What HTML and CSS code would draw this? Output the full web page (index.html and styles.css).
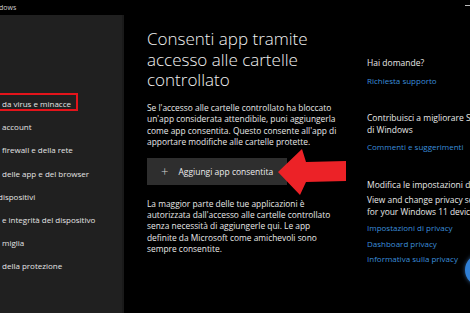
FILE: index.html
```html
<!DOCTYPE html>
<html lang="it">
<head>
    <meta charset="UTF-8">
    <meta name="viewport" content="width=device-width, initial-scale=1.0">
    <title>Sicurezza di Windows</title>
    <link rel="stylesheet" href="styles.css">
</head>
<body>
    <div class="titlebar">
        <span class="app-name">dows</span>
        <span class="win-min"></span>
    </div>

    <div class="window">
        <nav class="sidebar">
            <ul class="nav-list">
                <li class="nav-item active">da virus e minacce</li>
                <li class="nav-item">account</li>
                <li class="nav-item">firewall e della rete</li>
                <li class="nav-item">delle app e del browser</li>
                <li class="nav-item shift">dispositivi</li>
                <li class="nav-item">e integrità del dispositivo</li>
                <li class="nav-item">miglia</li>
                <li class="nav-item">della protezione</li>
            </ul>
        </nav>

        <main class="content">
            <h1 class="page-title">Consenti app tramite<br>accesso alle cartelle<br>controllato</h1>
            <p class="text">Se l'accesso alle cartelle controllato ha bloccato<br>un'app considerata attendibile, puoi aggiungerla<br>come app consentita. Questo consente all'app di<br>apportare modifiche alle cartelle protette.</p>
            <button class="add-btn"><span class="plus">+</span>Aggiungi app consentita</button>
            <p class="text">La maggior parte delle tue applicazioni è<br>autorizzata dall'accesso alle cartelle controllato<br>senza necessità di aggiungerle qui. Le app<br>definite da Microsoft come amichevoli sono<br>sempre consentite.</p>
        </main>

        <aside class="side-links">
            <section class="link-group">
                <h3>Hai domande?</h3>
                <a href="#">Richiesta supporto</a>
            </section>
            <section class="link-group">
                <h3>Contribuisci a migliorare Sicurezza<br>di Windows</h3>
                <a href="#">Commenti e suggerimenti</a>
            </section>
            <section class="link-group">
                <h3>Modifica le impostazioni di privacy</h3>
                <p>View and change privacy settings<br>for your Windows 11 device.</p>
                <a href="#">Impostazioni di privacy</a>
                <a href="#">Dashboard privacy</a>
                <a href="#">Informativa sulla privacy</a>
            </section>
        </aside>
    </div>

    <!-- freccia rossa sopra al pulsante -->
    <svg class="red-arrow" width="80" height="60" viewBox="0 0 80 60">
        <polygon points="0,24 24,1 28,14 68,13 68,33 28,34 22,47" fill="#ec2227"/>
    </svg>

    <div class="help-bubble"></div>
</body>
</html>
```

FILE: styles.css
```css
body {
    margin: 0;
    width: 470px;
    height: 313px;
    overflow: hidden;
    position: relative;
    background-color: #000;
    color: #e8e8e8;
    font-family: 'Open Sans', 'Noto Sans', sans-serif;
    font-size: 8px;
}
.titlebar {
    height: 15px;
    display: flex;
    justify-content: space-between;
    align-items: center;
}
.app-name {
    font-size: 7px;
    color: #cfcfcf;
    margin-left: -1px;
}
.win-min {
    width: 5px;
    height: 1px;
    background-color: #bbb;
    margin-bottom: 4px;
}
.window {
    display: grid;
    grid-template-columns: 124px 243px 1fr;
    height: 298px;
}
.sidebar {
    background-color: #202020;
    border-right: 2px solid #1a1a1a;
    box-sizing: border-box;
    overflow: hidden;
}
.nav-list {
    list-style: none;
    margin: 0;
    padding: 77px 0 0;
}
.nav-item {
    height: 23.2px;
    line-height: 23.2px;
    padding-left: 2px;
    white-space: nowrap;
    color: #e4e4e4;
}
.nav-item.active {
    width: 78px;
    height: 18px;
    line-height: 17px;
    margin: 1px 0 4.2px;
    border: 2px solid #e3141b;
    border-left: 0;
    box-sizing: border-box;
}
.nav-item.shift {
    padding-left: 0;
    margin-left: -2px;
}
.content {
    padding-left: 23px;
    white-space: nowrap;
}
.page-title {
    font-size: 17px;
    font-weight: 300;
    line-height: 20.7px;
    margin: 14px 0 11px;
    color: #f2f2f2;
}
.text {
    font-size: 8.4px;
    line-height: 11.2px;
    margin: 0;
}
.add-btn {
    display: flex;
    align-items: center;
    width: 140px;
    height: 27px;
    margin: 11px 0 13px;
    padding: 0 0 0 14px;
    background-color: #2e2e2e;
    border: 0;
    color: #ececec;
    font-family: inherit;
    font-size: 8.5px;
}
.plus {
    font-size: 13px;
    font-weight: 300;
    color: #cfcfcf;
    margin-right: 10px;
}
.side-links {
    white-space: nowrap;
    padding-top: 42px;
}
.link-group {
    margin-bottom: 24px;
}
.link-group h3 {
    font-size: 8.5px;
    font-weight: 400;
    line-height: 11.6px;
    margin: 0 0 4px;
}
.link-group p {
    font-size: 8.4px;
    margin: 0 0 3px;
    line-height: 11.4px;
}
.link-group a {
    display: block;
    color: #3b8edb;
    text-decoration: none;
    line-height: 15.5px;
}
.red-arrow {
    position: absolute;
    left: 278px;
    top: 148px;
}
.help-bubble {
    position: absolute;
    left: 465px;
    top: 254px;
    width: 32px;
    height: 32px;
    border-radius: 50%;
    background-color: #2f7fd6;
    box-shadow: 0 0 4px rgba(80, 150, 230, 0.6);
}
```
